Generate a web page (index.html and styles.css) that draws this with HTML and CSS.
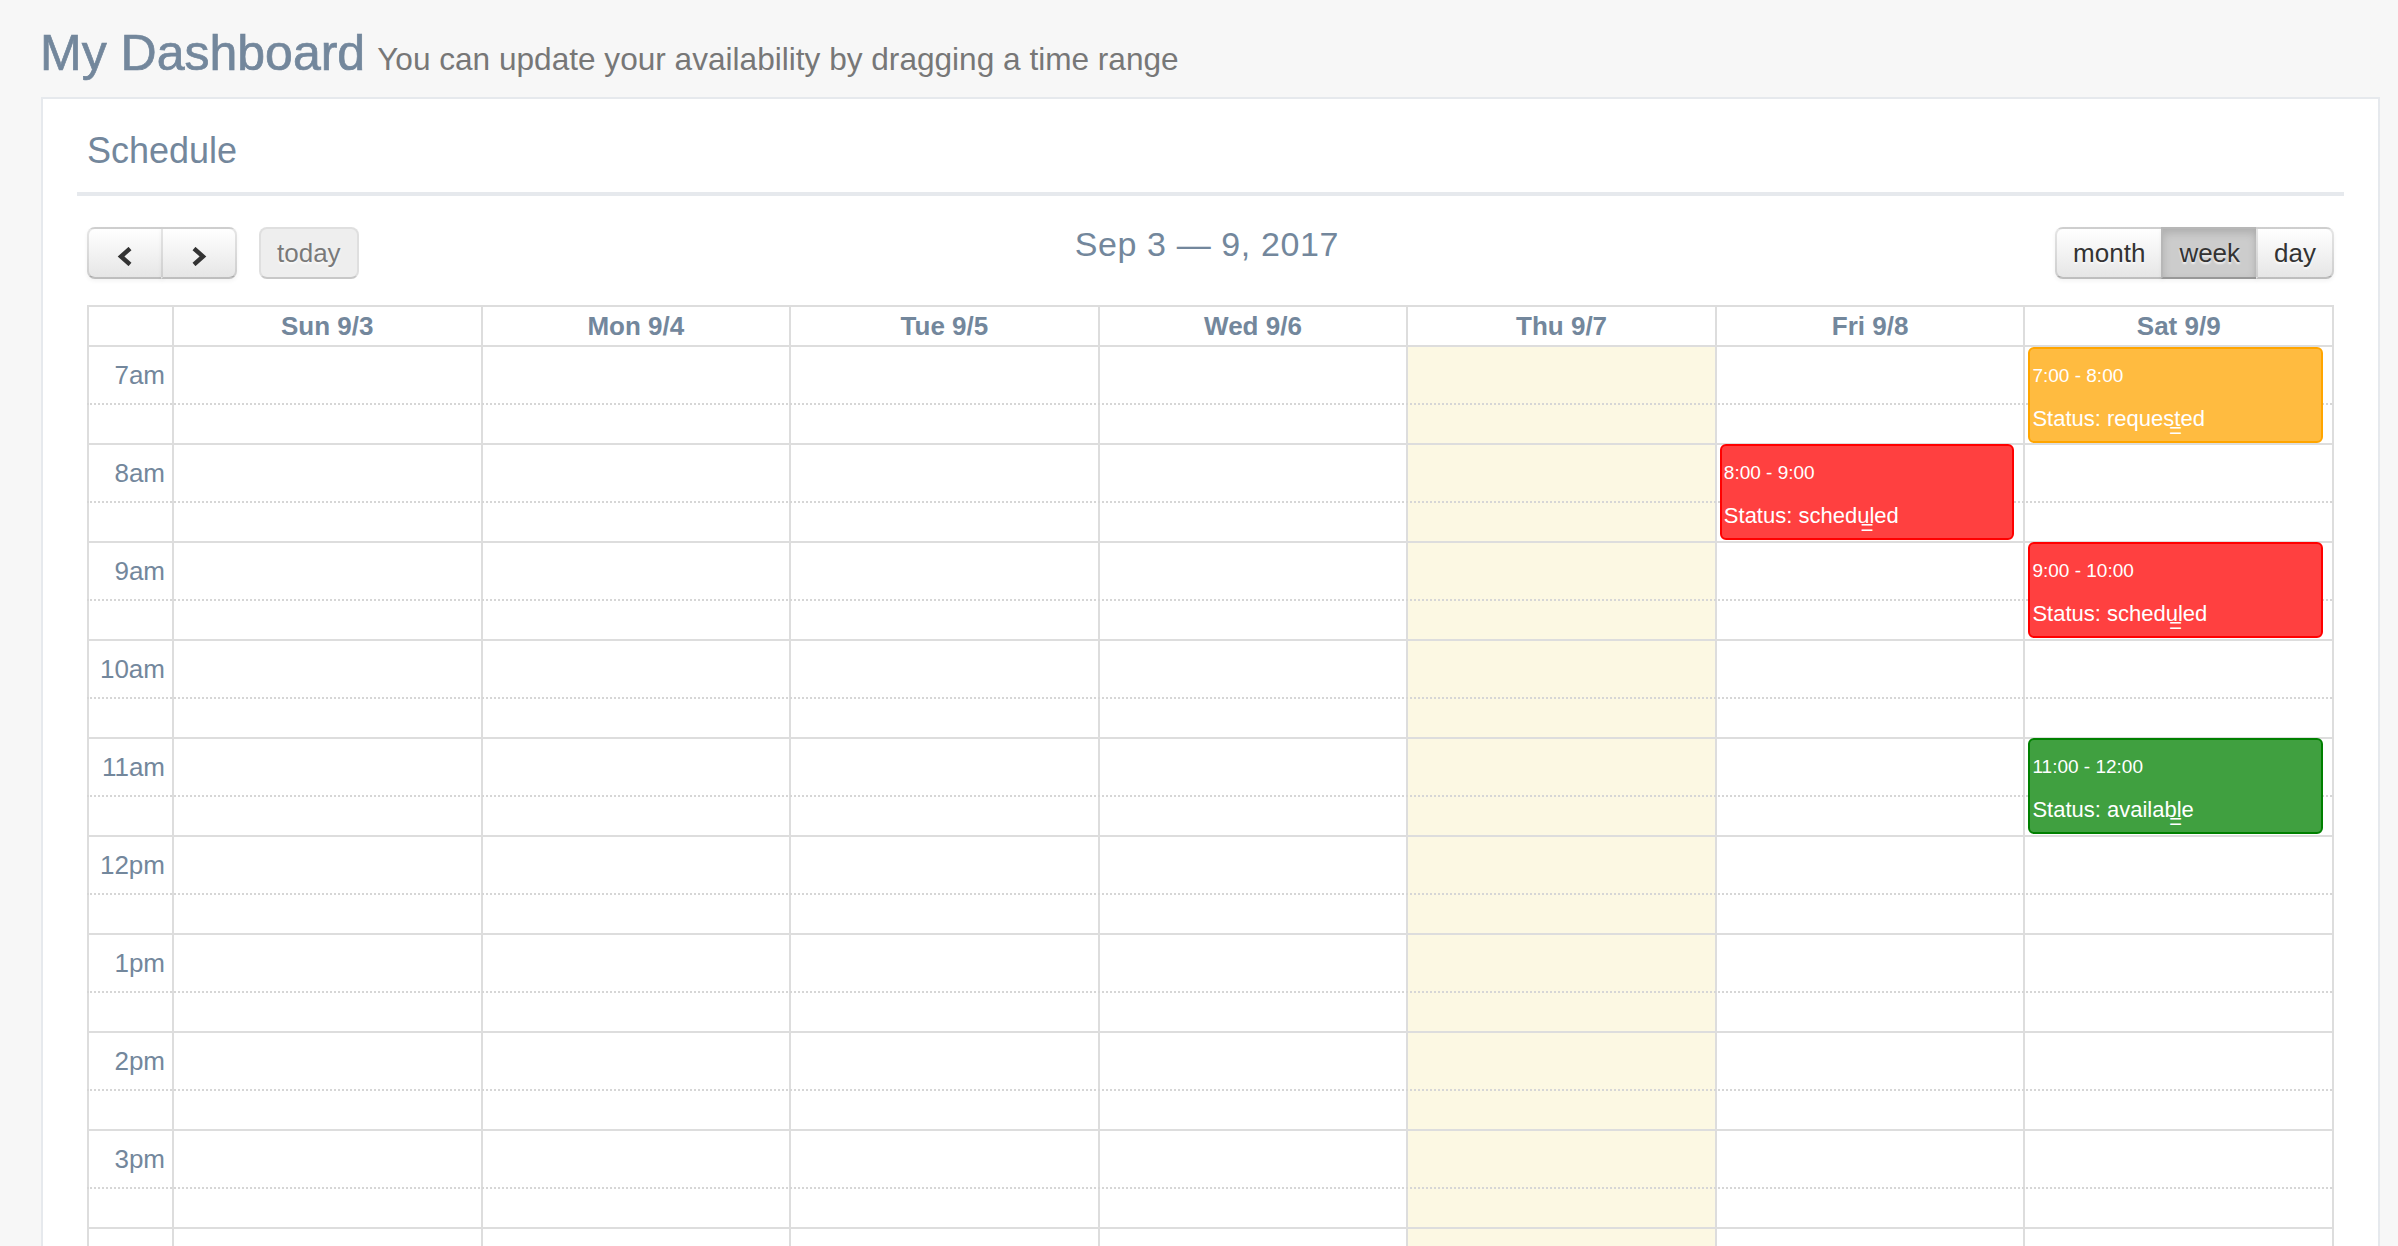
FILE: index.html
```html
<!DOCTYPE html>
<html lang="en">
<head>
<meta charset="utf-8">
<title>My Dashboard</title>
<link rel="stylesheet" href="styles.css">
</head>
<body>
<div class="page">
  <div class="page-title">
    <h1>My Dashboard<small>You can update your availability by dragging a time range</small></h1>
  </div>
  <div class="panel">
    <div class="panel-title"><h2>Schedule</h2></div>
    <div class="panel-content">
      <div class="toolbar">
        <div class="tb-left">
          <div class="btn-group">
            <button class="fc-btn btn-icon btn-first" aria-label="prev">
              <svg width="16" height="19" viewBox="0 0 16 19"><path d="M13 1.5 L4 9.5 L13 17.5" fill="none" stroke="#333" stroke-width="4.4"/></svg>
            </button>
            <button class="fc-btn btn-icon btn-last" aria-label="next">
              <svg width="16" height="19" viewBox="0 0 16 19"><path d="M3 1.5 L12 9.5 L3 17.5" fill="none" stroke="#333" stroke-width="4.4"/></svg>
            </button>
          </div>
          <button class="fc-btn btn-solo btn-disabled">today</button>
        </div>
        <div class="tb-center"><h2>Sep 3 — 9, 2017</h2></div>
        <div class="tb-right">
          <div class="btn-group">
            <button class="fc-btn btn-first">month</button>
            <button class="fc-btn btn-active">week</button>
            <button class="fc-btn btn-last">day</button>
          </div>
        </div>
      </div>

      <div class="cal">
        <div class="cal-head">
          <div class="hc"></div>
          <div class="hc">Sun 9/3</div>
          <div class="hc">Mon 9/4</div>
          <div class="hc">Tue 9/5</div>
          <div class="hc">Wed 9/6</div>
          <div class="hc">Thu 9/7</div>
          <div class="hc">Fri 9/8</div>
          <div class="hc">Sat 9/9</div>
        </div>
        <div class="cal-body">
          <div class="cal-bg">
            <div></div><div></div><div></div><div></div><div></div>
            <div class="today"></div><div></div><div></div>
          </div>
          <div class="cal-slats">
            <div class="slat major"><span class="axis">7am</span></div><div class="slat minor"></div>
            <div class="slat major"><span class="axis">8am</span></div><div class="slat minor"></div>
            <div class="slat major"><span class="axis">9am</span></div><div class="slat minor"></div>
            <div class="slat major"><span class="axis">10am</span></div><div class="slat minor"></div>
            <div class="slat major"><span class="axis">11am</span></div><div class="slat minor"></div>
            <div class="slat major"><span class="axis">12pm</span></div><div class="slat minor"></div>
            <div class="slat major"><span class="axis">1pm</span></div><div class="slat minor"></div>
            <div class="slat major"><span class="axis">2pm</span></div><div class="slat minor"></div>
            <div class="slat major"><span class="axis">3pm</span></div><div class="slat minor"></div>
            <div class="slat major"><span class="axis">4pm</span></div><div class="slat minor"></div>
          </div>
          <div class="cal-events">
            <div></div><div></div><div></div><div></div><div></div><div></div>
            <div class="ev-col">
              <div class="ev ev-red" style="top:99px"><div class="ev-time">8:00 - 9:00</div><div class="ev-status">Status: scheduled</div><div class="ev-resizer">=</div></div>
            </div>
            <div class="ev-col">
              <div class="ev ev-orange" style="top:2px"><div class="ev-time">7:00 - 8:00</div><div class="ev-status">Status: requested</div><div class="ev-resizer">=</div></div>
              <div class="ev ev-red" style="top:197px"><div class="ev-time">9:00 - 10:00</div><div class="ev-status">Status: scheduled</div><div class="ev-resizer">=</div></div>
              <div class="ev ev-green" style="top:393px"><div class="ev-time">11:00 - 12:00</div><div class="ev-status">Status: available</div><div class="ev-resizer">=</div></div>
            </div>
          </div>
        </div>
      </div>
    </div>
  </div>
</div>
</body>
</html>
```
FILE: styles.css
```css
html { overflow: hidden; }
body {
  margin: 0;
  background: #F7F7F7;
  font-family: "Liberation Sans", Arial, "Helvetica Neue", sans-serif;
  color: #73879C;
}
.page { padding: 0 18px 0 41px; }

.page-title {
  box-sizing: border-box;
  height: 97px;
  padding-top: 25px;
}
.page-title h1 {
  margin: 0 0 0 -1px;
  font-size: 50px;
  line-height: 56px;
  font-weight: normal;
  color: #73879C;
  -webkit-text-stroke: 0.7px #73879C;
  white-space: nowrap;
}
.page-title h1 small {
  font-size: 31.6px;
  color: #777;
  -webkit-text-stroke: 0;
  margin-left: 12px;
}

.panel {
  background: #fff;
  border: 2px solid #E6E9ED;
  padding: 20px 34px;
}
.panel-title {
  border-bottom: 4px solid #E6E9ED;
  padding: 12px 10px 21px;
}
.panel-title h2 {
  margin: 0;
  font-size: 36px;
  line-height: 40px;
  font-weight: normal;
}
.panel-content { padding: 31px 10px 0; }

/* toolbar */
.toolbar {
  display: flex;
  align-items: flex-start;
  margin-bottom: 26px;
}
.tb-left, .tb-right { display: flex; }
.tb-center { flex: 1; text-align: center; }
.tb-center h2 {
  margin: 0;
  font-size: 34px;
  line-height: 34px;
  font-weight: normal;
  letter-spacing: 0.6px;
}
.btn-group { display: flex; }
.fc-btn {
  box-sizing: border-box;
  height: 52px;
  margin: 0;
  padding: 0 16px;
  font-family: inherit;
  font-size: 26px;
  color: #333;
  background-color: #f5f5f5;
  background-image: linear-gradient(to bottom, #ffffff, #e6e6e6);
  border: 2px solid;
  border-color: rgba(0,0,0,.1) rgba(0,0,0,.1) rgba(0,0,0,.25);
  border-radius: 0;
  text-shadow: 0 2px 2px rgba(255,255,255,.75);
  box-shadow: inset 0 2px 0 rgba(255,255,255,.2), 0 2px 4px rgba(0,0,0,.05);
}
.btn-group .fc-btn + .fc-btn { margin-left: -2px; }
.btn-first { border-radius: 8px 0 0 8px; }
.btn-last { border-radius: 0 8px 8px 0; }
.btn-solo { border-radius: 8px; margin-left: 22px; }
.btn-icon {
  width: 76px;
  padding: 0;
  display: flex;
  align-items: center;
  justify-content: center;
}
.btn-icon svg { display: block; margin-top: 6px; }
.btn-disabled {
  background-image: none;
  background-color: #e6e6e6;
  opacity: .65;
  box-shadow: none;
}
.btn-active {
  background-image: none;
  background-color: #cccccc;
  box-shadow: inset 0 4px 8px rgba(0,0,0,.15), 0 2px 4px rgba(0,0,0,.05);
}

/* calendar */
.cal-head {
  display: grid;
  grid-template-columns: 85px repeat(7, 1fr);
  border-top: 2px solid #ddd;
  border-right: 2px solid #ddd;
}
.hc {
  border-left: 2px solid #ddd;
  height: 38px;
  line-height: 38px;
  text-align: center;
  font-size: 26px;
  font-weight: bold;
}
.cal-body {
  display: grid;
  border-right: 2px solid #ddd;
}
.cal-body > * { grid-area: 1 / 1; }
.cal-bg, .cal-events {
  display: grid;
  grid-template-columns: 85px repeat(7, 1fr);
}
.cal-bg > div { border-left: 2px solid #ddd; }
.cal-bg .today { background: #fcf8e3; }

.slat { box-sizing: border-box; }
.slat.major {
  height: 58px;
  border-top: 2px solid #ddd;
  display: flex;
  align-items: center;
}
.slat.minor {
  height: 40px;
  border-top: 2px dotted #d6d6d6;
}
.axis {
  box-sizing: border-box;
  width: 87px;
  padding-right: 9px;
  text-align: right;
  font-size: 26px;
  line-height: 37px;
}

.ev-col { position: relative; }
.ev {
  position: absolute;
  left: 5px;
  right: 9px;
  height: 96px;
  box-sizing: border-box;
  border: 2px solid;
  border-radius: 6px;
  padding: 0 2px;
  color: #fff;
  overflow: hidden;
}
.ev-red { background: #ff4040; border-color: #ff0000; }
.ev-orange { background: #ffbb40; border-color: #ffa500; }
.ev-green { background: #40a040; border-color: #008000; }
.ev-time {
  font-size: 19px;
  line-height: 27px;
  margin-top: 13px;
}
.ev-status {
  font-size: 22px;
  line-height: 31px;
  margin-top: 14px;
}
.ev-resizer {
  position: absolute;
  left: 0;
  right: 0;
  bottom: 0;
  height: 14px;
  line-height: 12px;
  overflow: hidden;
  text-align: center;
  font-family: "Liberation Mono", monospace;
  font-size: 22px;
}
```
